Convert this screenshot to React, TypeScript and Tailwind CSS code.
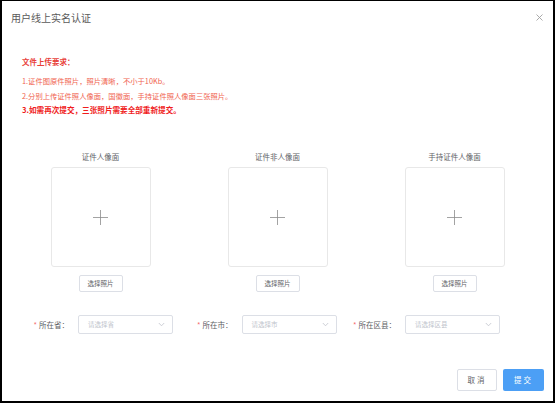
import React from "react";

const font = { fontFamily: '"Noto Sans CJK SC", "Noto Sans", sans-serif' };

function Chevron() {
  return (
    <svg width="7" height="5" viewBox="0 0 7 5" className="shrink-0">
      <path d="M0.8 1 L3.5 3.8 L6.2 1" fill="none" stroke="#c0c4cc" strokeWidth="0.8" />
    </svg>
  );
}

function Upload({ title }: { title: string }) {
  return (
    <div className="flex flex-col items-center">
      <div className="h-[12px] leading-[12px] text-[7.5px] text-[#606266]">{title}</div>
      <div className="mt-[4px] w-[100px] h-[100px] rounded-[3px] border border-[#e8e8e8] flex items-center justify-center">
        <svg width="15" height="15" viewBox="0 0 15 15">
          <path d="M7.5 0 V15 M0 7.5 H15" stroke="#8c8c8c" strokeWidth="0.8" />
        </svg>
      </div>
      <button className="mt-[8px] w-[44px] h-[17px] rounded-[2px] border border-[#dcdfe6] bg-white text-[6.5px] text-[#606266] flex items-center justify-center">
        选择照片
      </button>
    </div>
  );
}

function Field({ label, placeholder }: { label: string; placeholder: string }) {
  return (
    <div className="w-[163.5px] flex items-center">
      <div className="w-[60px] pr-[9px] text-right text-[7.5px] text-[#606266] whitespace-nowrap">
        <span className="text-[#f56c6c] mr-[2px]">*</span>
        {label}
      </div>
      <div className="w-[95px] h-[19px] rounded-[2px] border border-[#dcdfe6] flex items-center justify-between pl-[9px] pr-[7px]">
        <span className="text-[6.5px] text-[#c0c4cc]">{placeholder}</span>
        <Chevron />
      </div>
    </div>
  );
}

export default function App() {
  return (
    <div
      style={font}
      className="w-[555px] h-[403px] bg-white border-black border-t border-l-2 border-r-2 border-b-2 flex flex-col overflow-hidden"
    >
      <div className="h-[32px] flex items-center justify-between pl-[9px] pr-[10px]">
        <span className="text-[10px] text-[#5a5a5a]">用户线上实名认证</span>
        <svg width="7" height="7" viewBox="0 0 7 7">
          <path d="M0.5 0.5 L6.5 6.5 M6.5 0.5 L0.5 6.5" stroke="#a0a0a0" strokeWidth="0.9" />
        </svg>
      </div>

      <div className="mt-[22px] pl-[20px]">
        <div className="leading-[14px] text-[7.5px] font-bold text-[#e8413a] mb-[5px]">文件上传要求：</div>
        <div className="leading-[14.5px] text-[7.3px] text-[#f0634f]">1.证件图原件照片，照片清晰，不小于10Kb。</div>
        <div className="leading-[14.5px] text-[7.3px] text-[#f0634f]">2.分别上传证件照人像面，国徽面，手持证件照人像面三张照片。</div>
        <div className="leading-[14.5px] text-[7.6px] font-bold text-[#f01d1d]">3.如需再次提交，三张照片需要全部重新提交。</div>
      </div>

      <div className="mt-[33.5px] pl-[10px] grid grid-cols-3 w-[541px]">
        <Upload title="证件人像面" />
        <Upload title="证件非人像面" />
        <Upload title="手持证件人像面" />
      </div>

      <div className="mt-[23px] pl-[16px] flex">
        <Field label="所在省：" placeholder="请选择省" />
        <Field label="所在市：" placeholder="请选择市" />
        <Field label="所在区县：" placeholder="请选择区县" />
      </div>

      <div className="mt-[35px] pr-[9px] flex justify-end gap-[6px]">
        <button className="w-[40px] h-[22px] rounded-[2px] border border-[#dcdfe6] bg-white text-[7.5px] text-[#606266] tracking-[2px]">
          取消
        </button>
        <button className="w-[41px] h-[22px] rounded-[2px] bg-[#4c9ff5] text-[7.5px] text-white tracking-[2px]">
          提交
        </button>
      </div>
    </div>
  );
}
